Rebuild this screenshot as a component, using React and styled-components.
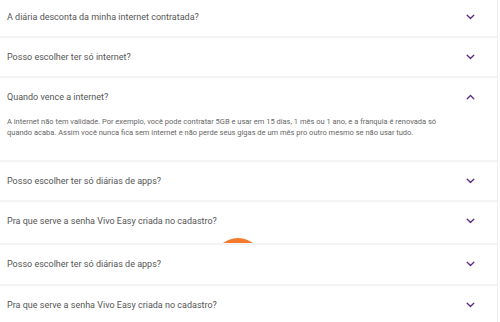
import React from "react";
import styled, { createGlobalStyle } from "styled-components";

const GlobalStyle = createGlobalStyle`
  html, body {
    margin: 0;
    padding: 0;
    background: #fff;
    overflow: hidden;
  }
  body {
    font-family: Roboto, "Liberation Sans", sans-serif;
  }
`;

const Page = styled.div`
  width: 500px;
  height: 322px;
  overflow: hidden;
  background: #fff;
`;

const List = styled.div`
  display: flex;
  flex-direction: column;
  width: 497px;
  margin-top: -2px;
  border-right: 1px solid #eeeeee;
`;

const Item = styled.div`
  position: relative;
  padding-bottom: ${(p) => p.$extra || 0}px;
  border-bottom: 2px solid #f3f3f3;
`;

const Question = styled.div`
  height: 38px;
  display: flex;
  align-items: center;
  justify-content: space-between;
  padding: 0 22px 0 7px;
  font-size: 9px;
  color: #555;
`;

const Answer = styled.p`
  margin: 0;
  padding: 0 60px 22px 7px;
  font-size: 7.5px;
  line-height: 11px;
  color: #666;
`;

const Clip = styled.div`
  position: absolute;
  inset: 0;
  overflow: hidden;
  pointer-events: none;
`;

const Semi = styled.div`
  position: absolute;
  left: 213px;
  top: 36px;
  width: 50px;
  height: 50px;
  border-radius: 50%;
  background: #f47a2e;
`;

const Chevron = ({ up }) => (
  <svg width="9" height="6" viewBox="0 0 9 6">
    <path
      d={up ? "M1.2 4.8 L4.5 1.5 L7.8 4.8" : "M1.2 1.2 L4.5 4.5 L7.8 1.2"}
      fill="none"
      stroke="#5f2a86"
      strokeWidth="1.3"
      strokeLinecap="round"
      strokeLinejoin="round"
    />
  </svg>
);

const faqs = [
  { q: "A diária desconta da minha internet contratada?" },
  { q: "Posso escolher ter só internet?" },
  {
    q: "Quando vence a internet?",
    open: true,
    a: "A internet não tem validade. Por exemplo, você pode contratar 5GB e usar em 15 dias, 1 mês ou 1 ano, e a franquia é renovada só quando acaba. Assim você nunca fica sem internet e não perde seus gigas de um mês pro outro mesmo se não usar tudo.",
  },
  { q: "Posso escolher ter só diárias de apps?" },
  { q: "Pra que serve a senha Vivo Easy criada no cadastro?", fab: true, extra: 3 },
  { q: "Posso escolher ter só diárias de apps?", extra: 1 },
  { q: "Pra que serve a senha Vivo Easy criada no cadastro?" },
];

export default function App() {
  return (
    <Page>
      <GlobalStyle />
      <List>
        {faqs.map((f, i) => (
          <Item key={i} $extra={f.extra}>
            {f.fab && (
              <Clip>
                <Semi />
              </Clip>
            )}
            <Question>
              <span>{f.q}</span>
              <Chevron up={f.open} />
            </Question>
            {f.open && <Answer>{f.a}</Answer>}
          </Item>
        ))}
      </List>
    </Page>
  );
}
